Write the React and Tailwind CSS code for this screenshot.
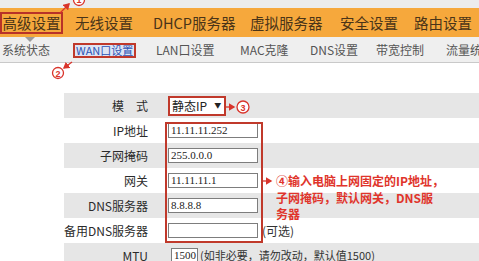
import React from 'react';

const mainNav = [
  { label: '高级设置', w: 'w-[75px]', active: true },
  { label: '无线设置', w: 'w-[78px]' },
  { label: 'DHCP服务器', w: 'w-[97px]' },
  { label: '虚拟服务器', w: 'w-[90px]' },
  { label: '安全设置', w: 'w-[74px]' },
  { label: '路由设置', w: 'w-[70px]' },
];

const subNav = [
  { label: '系统状态', w: 'w-[71px]' },
  { label: 'WAN口设置', w: 'w-[83px]', active: true },
  { label: 'LAN口设置', w: 'w-[84px]' },
  { label: 'MAC克隆', w: 'w-[70px]' },
  { label: 'DNS设置', w: 'w-[66px]' },
  { label: '带宽控制', w: 'w-[70px]' },
  { label: '流量统计', w: 'w-[70px]' },
];

function Row({ label, gray, children }) {
  return (
    <div className={`flex items-center h-[25px] ml-[64px] ${gray ? 'bg-[#e6e6e6]' : 'bg-white'}`}>
      <div className="w-[84px] text-right text-[12px] text-[#2b2b2b] whitespace-nowrap">{label}</div>
      <div className="ml-[20px] flex items-center">{children}</div>
    </div>
  );
}

function Input({ value }) {
  return (
    <div className="w-[90px] h-[15px] border border-[#7d7d7d] bg-white flex items-center pl-[2px] font-['Liberation_Serif',serif] text-[11px] text-[#222] leading-none">
      {value}
    </div>
  );
}

export default function App() {
  return (
    <div className="relative w-[479px] h-[261px] overflow-hidden bg-white font-['Noto_Sans_CJK_SC',sans-serif]">
      {/* top strip */}
      <div className="h-[8px] bg-[#ececec]" />

      {/* main nav */}
      <div className="h-[29px] bg-[#f6a83c] flex items-center text-[14.5px] text-[#4a3418]">
        {mainNav.map((item) => (
          <div key={item.label} className={`${item.w} shrink-0 flex items-center whitespace-nowrap`}>
            {item.active ? (
              <span className="border-2 border-[#b83228] leading-[18px] w-[63px] text-center whitespace-nowrap">{item.label}</span>
            ) : (
              <span>{item.label}</span>
            )}
          </div>
        ))}
      </div>

      {/* sub nav */}
      <div className="relative h-[26px] bg-[#efefef] border-b border-[#c9c9c9] flex items-center pl-[2px] text-[12px] text-[#555]">
        <div className="absolute left-[25px] top-0 w-0 h-0 border-l-[5px] border-r-[5px] border-t-[5px] border-l-transparent border-r-transparent border-t-[#9c9c9c]" />
        {subNav.map((item) => (
          <div key={item.label} className={`${item.w} shrink-0 whitespace-nowrap`}>
            {item.active ? (
              <span className="border-2 border-[#c0392b] bg-[#dde4f4] text-[#2c52b3] text-[11px] leading-[11px] px-[1px] inline-block">{item.label}</span>
            ) : (
              item.label
            )}
          </div>
        ))}
      </div>

      {/* form */}
      <div className="pt-[30px]">
        <Row label="模　式" gray>
          <div className="border-2 border-[#c0392b] h-[20px] w-[58px] bg-white flex items-center pl-[2px] text-[12px] text-[#222]">
            静态IP
            <span className="ml-[7px] text-[7px]">▼</span>
          </div>
        </Row>
        <Row label="IP地址">
          <Input value="11.11.11.252" />
        </Row>
        <Row label="子网掩码" gray>
          <Input value="255.0.0.0" />
        </Row>
        <Row label="网关">
          <Input value="11.11.11.1" />
        </Row>
        <Row label="DNS服务器" gray>
          <Input value="8.8.8.8" />
        </Row>
        <Row label="备用DNS服务器">
          <Input value="" />
          <span className="ml-[4px] text-[12px] text-[#333] whitespace-nowrap">(可选)</span>
        </Row>
        <Row label="MTU" gray>
          <div className="ml-[3px] w-[27px] h-[15px] border border-[#7d7d7d] bg-white flex items-center pl-[2px] font-['Liberation_Serif',serif] text-[11px] text-[#222]">
            1500
          </div>
          <span className="ml-[2px] text-[11px] text-[#333] whitespace-nowrap">(如非必要，请勿改动，默认值1500)</span>
        </Row>
      </div>

      {/* annotation: red box around inputs */}
      <div className="absolute left-[165px] top-[122px] w-[98px] h-[121px] border-2 border-[#c0392b]" />

      {/* annotation arrows and circled numbers */}
      <svg className="absolute inset-0 pointer-events-none" width="479" height="261" viewBox="0 0 479 261">
        <defs>
          <marker id="ah" markerWidth="6" markerHeight="6" refX="4" refY="3" orient="auto">
            <path d="M0,0 L5,3 L0,6 Z" fill="#d9342b" />
          </marker>
        </defs>
        <g stroke="#d9342b" strokeWidth="1.3" fill="none">
          <line x1="60" y1="13" x2="69" y2="4" markerEnd="url(#ah)" />
          <circle cx="79" cy="0" r="5.5" fill="#fff" />
          <line x1="72" y1="62" x2="64" y2="68" markerEnd="url(#ah)" />
          <circle cx="58" cy="73" r="5.5" fill="#fff" />
          <line x1="226" y1="107" x2="234" y2="107" markerEnd="url(#ah)" />
          <circle cx="243" cy="107" r="6" fill="#fff" />
          <line x1="263" y1="181" x2="271" y2="181" markerEnd="url(#ah)" />
        </g>
        <g fill="#d9342b" fontSize="9" fontWeight="bold" fontFamily="Liberation Sans, sans-serif" textAnchor="middle">
          <text x="79" y="3">1</text>
          <text x="58" y="76.5">2</text>
          <text x="243" y="110.5">3</text>
        </g>
      </svg>

      <div className="absolute left-[276px] top-[173px] text-[12px] font-bold leading-[16.5px] text-[#e0342b] whitespace-nowrap">
        ④输入电脑上网固定的IP地址，
        <br />
        子网掩码，默认网关，DNS服
        <br />
        务器
      </div>
    </div>
  );
}
